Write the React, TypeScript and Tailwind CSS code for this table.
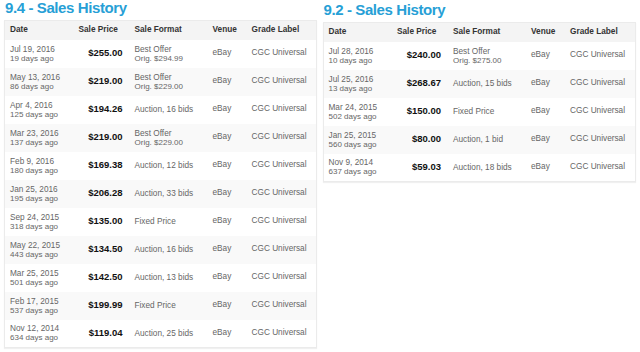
import React from "react";

interface Sale {
  date: string;
  ago: string;
  price: string;
  format: string;
  orig?: string;
}

const left: Sale[] = [
  { date: "Jul 19, 2016", ago: "19 days ago", price: "$255.00", format: "Best Offer", orig: "Orig. $294.99" },
  { date: "May 13, 2016", ago: "86 days ago", price: "$219.00", format: "Best Offer", orig: "Orig. $229.00" },
  { date: "Apr 4, 2016", ago: "125 days ago", price: "$194.26", format: "Auction, 16 bids" },
  { date: "Mar 23, 2016", ago: "137 days ago", price: "$219.00", format: "Best Offer", orig: "Orig. $229.00" },
  { date: "Feb 9, 2016", ago: "180 days ago", price: "$169.38", format: "Auction, 12 bids" },
  { date: "Jan 25, 2016", ago: "195 days ago", price: "$206.28", format: "Auction, 33 bids" },
  { date: "Sep 24, 2015", ago: "318 days ago", price: "$135.00", format: "Fixed Price" },
  { date: "May 22, 2015", ago: "443 days ago", price: "$134.50", format: "Auction, 16 bids" },
  { date: "Mar 25, 2015", ago: "501 days ago", price: "$142.50", format: "Auction, 13 bids" },
  { date: "Feb 17, 2015", ago: "537 days ago", price: "$199.99", format: "Fixed Price" },
  { date: "Nov 12, 2014", ago: "634 days ago", price: "$119.04", format: "Auction, 25 bids" },
];

const right: Sale[] = [
  { date: "Jul 28, 2016", ago: "10 days ago", price: "$240.00", format: "Best Offer", orig: "Orig. $275.00" },
  { date: "Jul 25, 2016", ago: "13 days ago", price: "$268.67", format: "Auction, 15 bids" },
  { date: "Mar 24, 2015", ago: "502 days ago", price: "$150.00", format: "Fixed Price" },
  { date: "Jan 25, 2015", ago: "560 days ago", price: "$80.00", format: "Auction, 1 bid" },
  { date: "Nov 9, 2014", ago: "637 days ago", price: "$59.03", format: "Auction, 18 bids" },
];

const SalesTable: React.FC<{ grade: string; rows: Sale[]; className?: string }> = ({ grade, rows, className }) => {
  return (
    <div className={className}>
      <h2 className="h-[20px] pl-[1px] text-[15px] leading-[16px] font-bold tracking-[-0.4px] text-[#279fd6]">
        {grade} - Sales History
      </h2>
      <table className="w-full table-fixed border-collapse border border-[#ebebeb] shadow-[0_1px_1px_rgba(0,0,0,0.06)]">
        <colgroup>
          <col className="w-[68px]" />
          <col className="w-[56px]" />
          <col className="w-[78px]" />
          <col className="w-[39px]" />
          <col />
        </colgroup>
        <thead>
          <tr className="h-[19px] bg-[#f4f4f4] text-left text-[8.25px] font-bold text-[#333]">
            <th className="pl-[5px] font-bold">Date</th>
            <th className="pl-[6px] font-bold">Sale Price</th>
            <th className="pl-[6px] font-bold">Sale Format</th>
            <th className="pl-[6px] font-bold">Venue</th>
            <th className="pl-[6px] font-bold">Grade Label</th>
          </tr>
        </thead>
        <tbody>
          {rows.map((r, i) => (
            <tr key={i} className={`h-[28px] text-[8.25px] text-[#666] ${i % 2 === 1 ? "bg-[#f9f9f9]" : "bg-white"}`}>
              <td className="pl-[5px] align-middle">
                <div className="leading-[9px]">{r.date}</div>
                <div className="text-[8px] leading-[9px]">{r.ago}</div>
              </td>
              <td className="pr-[6px] text-right text-[9.5px] font-bold text-[#111]">{r.price}</td>
              <td className="pl-[6px]">
                <div className="leading-[9px]">{r.format}</div>
                {r.orig && <div className="text-[8px] leading-[9px]">{r.orig}</div>}
              </td>
              <td className="pl-[6px]">eBay</td>
              <td className="pl-[6px]">CGC Universal</td>
            </tr>
          ))}
        </tbody>
      </table>
    </div>
  );
}

export default function App() {
  return (
    <div className="flex h-[352px] w-[640px] items-start gap-[6px] bg-white px-[4px] font-['Liberation_Sans',Arial,sans-serif]">
      <SalesTable grade="9.4" rows={left} className="w-[313px]" />
      <SalesTable grade="9.2" rows={right} className="mt-[2px] w-[314px]" />
    </div>
  );
}
